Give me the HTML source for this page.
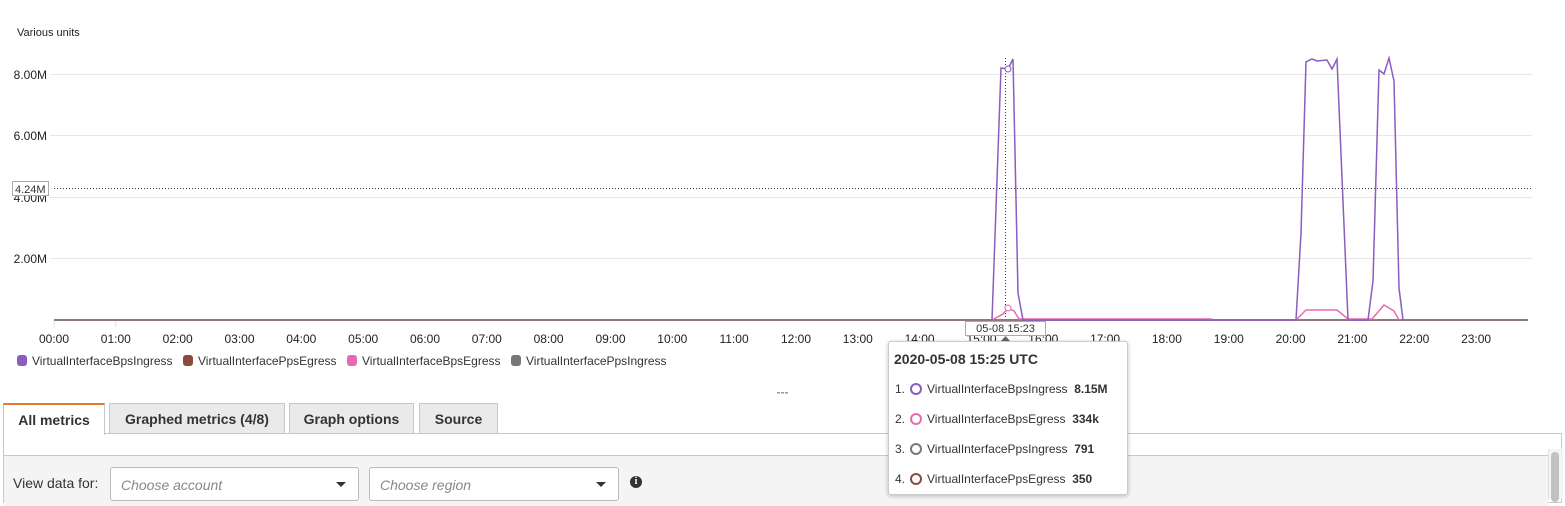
<!DOCTYPE html>
<html><head><meta charset="utf-8"><style>
body{margin:0;width:1565px;height:497px;overflow:hidden;background:#fff;font-family:"Liberation Sans",Arial,sans-serif;position:relative;color:#333}
.abs{position:absolute}
.tab{position:absolute;top:403px;height:30px;background:#eaeaea;border:1px solid #c8c8c8;border-bottom:none;font-weight:bold;font-size:14px;color:#333;text-align:center;line-height:31px;box-sizing:border-box}
.dd{position:absolute;top:467px;height:34px;background:#fff;border:1px solid #bbb;border-radius:3px;box-sizing:border-box;font-style:italic;color:#888;font-size:14px;padding:9px 0 0 10px}
.dd:after{content:"";position:absolute;right:12px;top:14px;border-left:5px solid transparent;border-right:5px solid transparent;border-top:5px solid #333}
.c{display:inline-block;width:8px;height:8px;border-radius:50%;vertical-align:-2px;margin:0 5px 0 5px}
</style></head><body>
<svg class="abs" style="left:0;top:0" width="1565" height="400" font-family="Liberation Sans, Arial, sans-serif">
<text x="17" y="36" font-size="11" fill="#222">Various units</text>
<g stroke="#e6e6e6" stroke-width="1">
<line x1="50" y1="74.5" x2="1532" y2="74.5"/><line x1="50" y1="135.5" x2="1532" y2="135.5"/>
<line x1="50" y1="197.5" x2="1532" y2="197.5"/><line x1="50" y1="258.5" x2="1532" y2="258.5"/>
</g>
<g font-size="12" fill="#222" text-anchor="end">
<text x="47" y="79">8.00M</text><text x="47" y="140">6.00M</text><text x="47" y="202">4.00M</text><text x="47" y="263">2.00M</text>
</g>
<line x1="54" y1="188.5" x2="1532" y2="188.5" stroke="#333" stroke-dasharray="1,2"/>
<rect x="12.5" y="181.5" width="36" height="14" fill="#fff" stroke="#aaa"/>
<text x="15" y="193" font-size="11" fill="#333">4.24M</text>
<line x1="1005.5" y1="58" x2="1005.5" y2="320" stroke="#333" stroke-dasharray="1,2"/>
<g stroke="#ddd"><line x1="54" y1="321" x2="54" y2="327"/><line x1="115.8" y1="321" x2="115.8" y2="327"/></g>
<line x1="54" y1="320" x2="1528" y2="320" stroke="#8b7a80" stroke-width="2"/>
<polyline fill="none" stroke="#e86ab3" stroke-width="1.5" points="992,320 1003,314 1008,308 1014,311 1019,319 1210,319 1215,320 1296,320 1306,310 1337,310 1348,319 1372,319 1384,305 1394,311 1399,320"/>
<polyline fill="none" stroke="#8d5cbf" stroke-width="1.5" points="992,320 1001,68 1008,69 1013,59 1018,293 1023,320 1296,320 1301,233 1306,62 1312,59 1317,61 1327,60 1332,69 1337,59 1348,320 1368,320 1373,281 1379,70 1384,74 1389,58 1394,81 1399,288 1403,320"/>
<circle cx="1008" cy="69" r="3" fill="#fff" stroke="#8d5cbf"/>
<circle cx="1008" cy="308" r="3" fill="#fff" stroke="#e86ab3"/>
<g font-size="12" fill="#222" text-anchor="middle">
<text x="54" y="343">00:00</text><text x="115.8" y="343">01:00</text><text x="177.7" y="343">02:00</text><text x="239.5" y="343">03:00</text><text x="301.3" y="343">04:00</text><text x="363.2" y="343">05:00</text><text x="425" y="343">06:00</text><text x="486.8" y="343">07:00</text><text x="548.6" y="343">08:00</text><text x="610.5" y="343">09:00</text><text x="672.3" y="343">10:00</text><text x="734.1" y="343">11:00</text><text x="796" y="343">12:00</text><text x="857.8" y="343">13:00</text><text x="919.6" y="343">14:00</text><text x="981.5" y="343">15:00</text><text x="1043.3" y="343">16:00</text><text x="1105.1" y="343">17:00</text><text x="1166.9" y="343">18:00</text><text x="1228.8" y="343">19:00</text><text x="1290.6" y="343">20:00</text><text x="1352.4" y="343">21:00</text><text x="1414.3" y="343">22:00</text><text x="1476.1" y="343">23:00</text>
</g>
<rect x="965.5" y="321.5" width="80" height="14" fill="#fff" stroke="#aaa"/>
<text x="1005.5" y="332" font-size="11" fill="#333" text-anchor="middle">05-08 15:23</text>
<polygon points="1001,341 1010,341 1005.5,336" fill="#666"/>
<g font-size="12" fill="#333">
<rect x="17" y="355" width="10" height="11" rx="3" fill="#8d5cbf"/><text x="32" y="365">VirtualInterfaceBpsIngress</text>
<rect x="183" y="355" width="10" height="11" rx="3" fill="#8b4a3e"/><text x="198" y="365">VirtualInterfacePpsEgress</text>
<rect x="347" y="355" width="10" height="11" rx="3" fill="#e86ab3"/><text x="362" y="365">VirtualInterfaceBpsEgress</text>
<rect x="511" y="355" width="10" height="11" rx="3" fill="#777"/><text x="526" y="365">VirtualInterfacePpsIngress</text>
</g>
<g fill="#999"><rect x="777" y="392" width="3" height="1.5"/><rect x="781" y="392" width="3" height="1.5"/><rect x="785" y="392" width="3" height="1.5"/></g>
</svg>
<div class="abs" style="left:3px;top:433px;width:1559px;height:70px;border:1px solid #c8c8c8;box-sizing:border-box;background:#fff"></div>
<div class="abs" style="left:4px;top:455px;width:1544px;height:50px;background:#f4f4f4;border-top:1px solid #c8c8c8"></div>
<div class="abs" style="left:1548px;top:449px;width:14px;height:50px;background:#f4f4f4;border-left:1px solid #e0e0e0"></div>
<div class="abs" style="left:1551px;top:452px;width:8px;height:50px;background:#c1c1c1;border-radius:4px"></div>
<div class="tab" style="left:3px;width:102px;height:32px;background:#fff;border-top:2px solid #e8782e;line-height:30px">All metrics</div>
<div class="tab" style="left:109px;width:176px">Graphed metrics (4/8)</div>
<div class="tab" style="left:289px;width:125px">Graph options</div>
<div class="tab" style="left:419px;width:79px">Source</div>
<div class="abs" style="left:13px;top:475px;font-size:14px;color:#333">View data for:</div>
<div class="dd" style="left:110px;width:249px">Choose account</div>
<div class="dd" style="left:369px;width:250px">Choose region</div>
<div class="abs" style="left:630px;top:476px;width:12px;height:12px;border-radius:6px;background:#333;color:#fff;font-size:10px;font-weight:bold;text-align:center;line-height:12px;font-family:'Liberation Serif',serif">i</div>
<div class="abs" style="left:888px;top:341px;width:240px;height:154px;background:#fff;border:1px solid #ccc;border-radius:3px;box-shadow:0 1px 4px rgba(0,0,0,.25);box-sizing:border-box;font-size:12px;color:#333">
<div style="position:absolute;left:5px;top:9px;font-size:14px;font-weight:bold">2020-05-08 15:25 UTC</div>
<div style="position:absolute;left:6px;top:40px">1.<span class="c" style="border:2.5px solid #8d5cbf"></span>VirtualInterfaceBpsIngress&nbsp; <b>8.15M</b></div>
<div style="position:absolute;left:6px;top:70px">2.<span class="c" style="border:2.5px solid #e86ab3"></span>VirtualInterfaceBpsEgress &nbsp;<b>334k</b></div>
<div style="position:absolute;left:6px;top:100px">3.<span class="c" style="border:2.5px solid #777"></span>VirtualInterfacePpsIngress&nbsp; <b>791</b></div>
<div style="position:absolute;left:6px;top:130px">4.<span class="c" style="border:2.5px solid #8b4a3e"></span>VirtualInterfacePpsEgress &nbsp;<b>350</b></div>
</div>
</body></html>
